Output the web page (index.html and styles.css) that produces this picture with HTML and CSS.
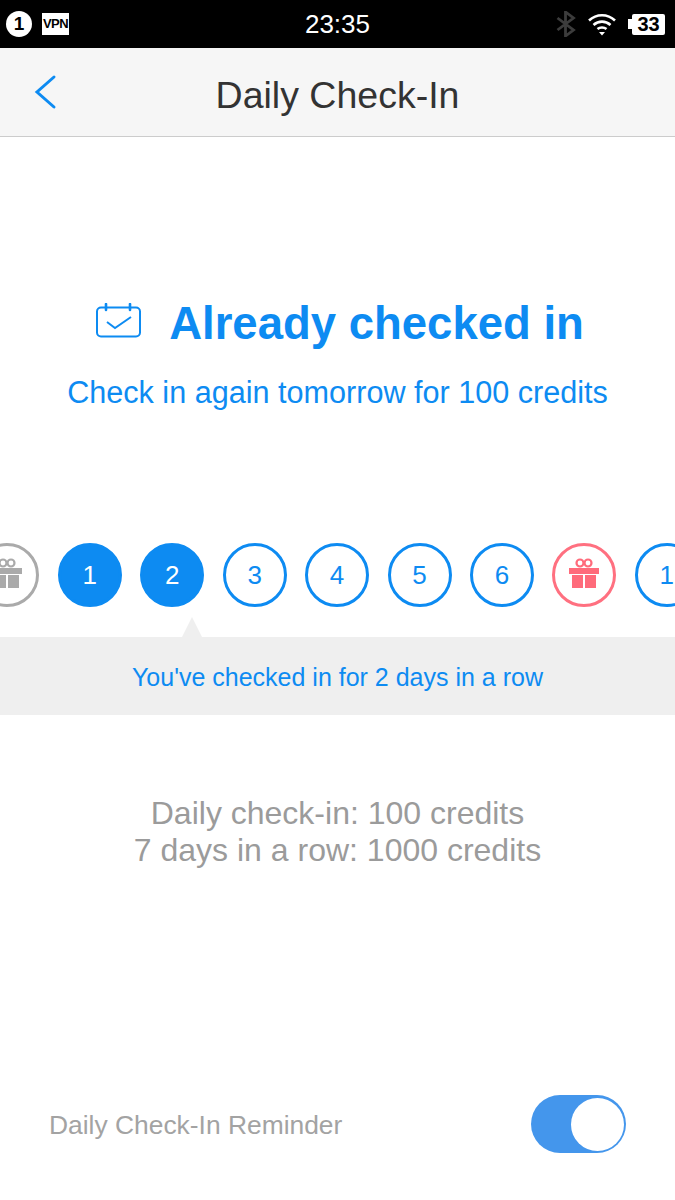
FILE: index.html
```html
<!DOCTYPE html>
<html lang="en">
<head>
<meta charset="utf-8">
<title>Daily Check-In</title>
<link rel="stylesheet" href="styles.css">
</head>
<body>
<div class="screen">
  <header class="status">
    <div class="status-left">
      <span class="badge">1</span>
      <span class="vpn">VPN</span>
    </div>
    <div class="clock">23:35</div>
    <div class="status-right">
      <svg class="bt" width="20" height="26" viewBox="0 0 20 26"><path d="M1.500 7l16 12-8 6V1l8 6-16 12" fill="none" stroke="#3c3c3c" stroke-width="2.800"/></svg>
      <svg class="wifi" width="30" height="24" viewBox="0 0 30 24"><path d="M2 8.500C9.500 1.500 20.500 1.500 28 8.500M6.500 13C11.500 8.500 18.500 8.500 23.500 13M10.500 17C13 15 17 15 19.500 17" fill="none" stroke="#fff" stroke-width="2.600"/><path d="M12 20h6l-3 3.500z" fill="#fff"/></svg>
      <div class="battery"><span class="nub"></span><span class="level">33</span></div>
    </div>
  </header>
  <nav class="nav">
    <svg class="back" width="24" height="36" viewBox="0 0 24 36"><path d="M21 3L4 18l17 15" fill="none" stroke="#0d8bf2" stroke-width="3" stroke-linecap="round"/></svg>
    <h1 class="nav-title">Daily Check-In</h1>
  </nav>
  <section class="hero">
    <div class="headline">
      <svg class="cal" width="46" height="35" viewBox="0 0 46 35"><rect x="1" y="4.500" width="43" height="29" rx="4" fill="none" stroke="#0d8bf2" stroke-width="2"/><path d="M10 1v6M34 1v6" stroke="#0d8bf2" stroke-width="2.600" stroke-linecap="round"/><path d="M11 19l8 6 16-11" fill="none" stroke="#0d8bf2" stroke-width="2"/></svg>
      <h2 class="headline-text">Already checked in</h2>
    </div>
    <p class="sub">Check in again tomorrow for 100 credits</p>
  </section>
  <section class="days">
    <div class="day gift-past"><svg class="gift" width="30" height="30" viewBox="0 0 30 30"><use href="#gift"/></svg></div>
    <div class="day done">1</div>
    <div class="day done">2</div>
    <div class="day">3</div>
    <div class="day">4</div>
    <div class="day">5</div>
    <div class="day">6</div>
    <div class="day gift-next"><svg class="gift" width="30" height="30" viewBox="0 0 30 30"><use href="#gift"/></svg></div>
    <div class="day">1</div>
  </section>
  <section class="streak">
    <span class="pointer"></span>
    You've checked in for 2 days in a row
  </section>
  <section class="rules">
    <p>Daily check-in: 100 credits</p>
    <p>7 days in a row: 1000 credits</p>
  </section>
  <footer class="reminder">
    <span class="reminder-label">Daily Check-In Reminder</span>
    <span class="toggle"><span class="knob"></span></span>
  </footer>
</div>
<svg class="defs" width="0" height="0"><defs><g id="gift"><path d="M0 10h30v6H0zM3 17h11v13H3zM16 17h11v13H16z" fill="currentColor"/><circle cx="11" cy="5" r="3.500" fill="none" stroke="currentColor" stroke-width="2.200"/><circle cx="19" cy="5" r="3.500" fill="none" stroke="currentColor" stroke-width="2.200"/></g></defs></svg>
</body>
</html>
```
FILE: styles.css
```css
* { box-sizing: border-box; }
html, body { margin: 0; padding: 0; background: #fff; }
body { font-family: "Liberation Sans", Arial, sans-serif; }
.screen { width: 675px; height: 1200px; overflow: hidden; display: flex; flex-direction: column; }
.defs { position: absolute; }

.status { height: 48px; background: #000; color: #fff; display: grid; grid-template-columns: 1fr auto 1fr; align-items: center; padding: 0 10px 0 6px; }
.status-left { display: flex; align-items: center; gap: 10px; }
.badge { width: 26px; height: 26px; border-radius: 50%; background: #fff; color: #000; font-size: 19px; font-weight: bold; line-height: 26px; text-align: center; }
.vpn { width: 27px; height: 22px; background: #fff; color: #000; font-size: 13px; font-weight: bold; line-height: 22px; text-align: center; letter-spacing: -0.5px; }
.clock { font-size: 26px; padding-left: 4px; }
.status-right { display: flex; align-items: center; justify-content: flex-end; gap: 11px; }
.battery { display: flex; align-items: center; }
.nub { width: 4px; height: 10px; background: #fff; }
.level { width: 33px; height: 21px; background: #fff; color: #000; font-size: 20px; font-weight: bold; line-height: 21px; text-align: center; border-radius: 2px; }

.nav { height: 89px; padding-top: 6px; background: #f6f6f6; border-bottom: 1px solid #ccc; display: flex; align-items: center; justify-content: center; position: relative; }
.back { position: absolute; left: 33px; top: 26px; }
.nav-title { margin: 0; font-size: 37.500px; font-weight: normal; color: #333; }

.hero { padding: 159px 0 0 5px; height: 406px; display: flex; flex-direction: column; align-items: center; flex: none; }
.headline { display: flex; align-items: center; gap: 27px; height: 56px; }
.cal { margin-top: -8px; }
.headline-text { margin: 0; font-size: 45.500px; font-weight: bold; color: #0d8bf2; }
.sub { margin: 23px 0 0 -5px; font-size: 30.600px; color: #0d8bf2; }

.days { display: flex; gap: 18.450px; margin-left: -24.700px; height: 64px; flex: none; }
.day { flex: none; width: 64px; height: 64px; border-radius: 50%; border: 3px solid #0d8bf2; color: #0d8bf2; font-size: 26px; display: flex; align-items: center; justify-content: center; }
.day.done { background: #0d8bf2; color: #fff; }
.gift { margin-top: -4px; }
.gift-past { border-color: #aaa; color: #aaa; }
.gift-next { border-color: #ff7080; color: #ff6b7b; }

.streak { position: relative; margin-top: 30px; padding-top: 2px; height: 78px; background: #efefef; color: #0d8bf2; font-size: 25px; display: flex; align-items: center; justify-content: center; flex: none; }
.pointer { position: absolute; left: 182px; top: -20px; width: 0; height: 0; border-left: 10px solid transparent; border-right: 10px solid transparent; border-bottom: 20px solid #efefef; }

.rules { margin-top: 80px; text-align: center; color: #9b9b9b; font-size: 32px; line-height: 37px; }
.rules p { margin: 0; }

.reminder { margin-top: auto; height: 150px; padding: 0 49px 2px; display: flex; align-items: center; justify-content: space-between; }
.reminder-label { color: #a3a3a3; font-size: 26.400px; padding-top: 2px; }
.toggle { width: 95px; height: 58px; border-radius: 29px; background: #4496ec; display: flex; align-items: center; justify-content: flex-end; padding-right: 2px; }
.knob { width: 53px; height: 53px; border-radius: 50%; background: #fff; }
```
